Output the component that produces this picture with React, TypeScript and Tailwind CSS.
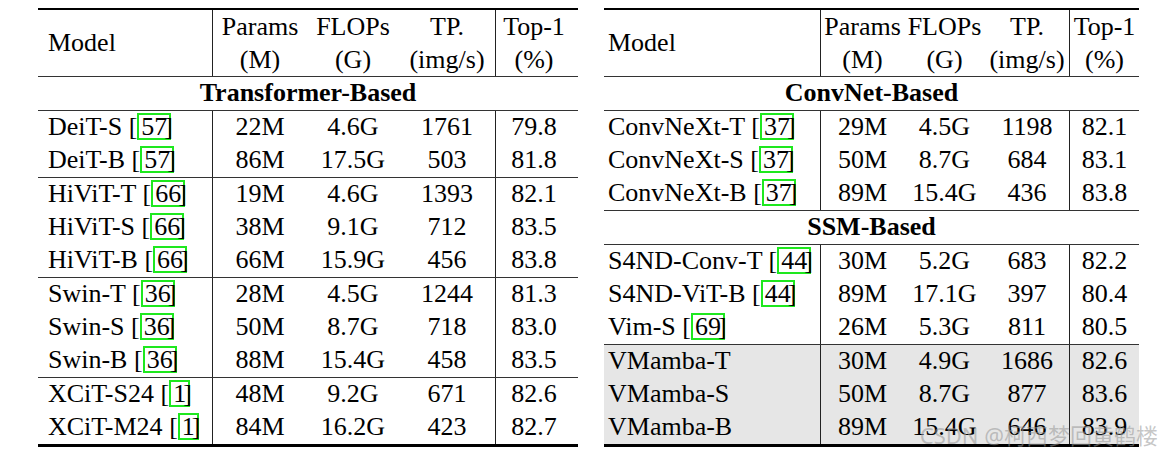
import React from 'react';

type Row = { name: string; cite?: string; params: string; flops: string; tp: string; top1: string };
type Group = { rows: Row[]; shaded?: boolean };
type Section = { title: string; groups: Group[] };

const r = (name: string, cite: string | undefined, params: string, flops: string, tp: string, top1: string): Row => ({
  name,
  cite,
  params,
  flops,
  tp,
  top1,
});

const leftSections: Section[] = [
  {
    title: 'Transformer-Based',
    groups: [
      { rows: [r('DeiT-S', '57', '22M', '4.6G', '1761', '79.8'), r('DeiT-B', '57', '86M', '17.5G', '503', '81.8')] },
      {
        rows: [
          r('HiViT-T', '66', '19M', '4.6G', '1393', '82.1'),
          r('HiViT-S', '66', '38M', '9.1G', '712', '83.5'),
          r('HiViT-B', '66', '66M', '15.9G', '456', '83.8'),
        ],
      },
      {
        rows: [
          r('Swin-T', '36', '28M', '4.5G', '1244', '81.3'),
          r('Swin-S', '36', '50M', '8.7G', '718', '83.0'),
          r('Swin-B', '36', '88M', '15.4G', '458', '83.5'),
        ],
      },
      { rows: [r('XCiT-S24', '1', '48M', '9.2G', '671', '82.6'), r('XCiT-M24', '1', '84M', '16.2G', '423', '82.7')] },
    ],
  },
];

const rightSections: Section[] = [
  {
    title: 'ConvNet-Based',
    groups: [
      {
        rows: [
          r('ConvNeXt-T', '37', '29M', '4.5G', '1198', '82.1'),
          r('ConvNeXt-S', '37', '50M', '8.7G', '684', '83.1'),
          r('ConvNeXt-B', '37', '89M', '15.4G', '436', '83.8'),
        ],
      },
    ],
  },
  {
    title: 'SSM-Based',
    groups: [
      {
        rows: [
          r('S4ND-Conv-T', '44', '30M', '5.2G', '683', '82.2'),
          r('S4ND-ViT-B', '44', '89M', '17.1G', '397', '80.4'),
          r('Vim-S', '69', '26M', '5.3G', '811', '80.5'),
        ],
      },
      {
        shaded: true,
        rows: [
          r('VMamba-T', undefined, '30M', '4.9G', '1686', '82.6'),
          r('VMamba-S', undefined, '50M', '8.7G', '877', '83.6'),
          r('VMamba-B', undefined, '89M', '15.4G', '646', '83.9'),
        ],
      },
    ],
  },
];

// hyperref style green link box
function Cite({ n }: { n: string }) {
  return (
    <>
      [
      <span className="inline-block h-[27px] border-2 border-[#1ee81e] px-[2px] leading-[23px]">{n}</span>
      <span className="-ml-[7px]">]</span>
    </>
  );
}

function Table({ cols, sections, size }: { cols: string[]; sections: Section[]; size: string }) {
  return (
    <div className={`border-t-2 border-b-[3px] border-black ${size}`}>
      <div className="flex leading-[33px]">
        <div className={`${cols[0]} h-[66px] leading-[65px]`}>Model</div>
        <div className={`${cols[1]} border-l border-[#222] text-center`}>
          Params
          <br />
          (M)
        </div>
        <div className={`${cols[2]} text-center`}>
          FLOPs
          <br />
          (G)
        </div>
        <div className={`${cols[3]} text-center`}>
          TP.
          <br />
          (img/s)
        </div>
        <div className={`${cols[4]} border-l border-[#222] text-center`}>
          Top-1
          <br />
          (%)
        </div>
      </div>
      {sections.map((s) => (
        <div key={s.title}>
          <div className="h-[34px] border-t border-[#333] text-center font-bold leading-[32px]">{s.title}</div>
          {s.groups.map((g, gi) => (
            <div key={gi} className={`border-t border-[#333] ${g.shaded ? 'bg-[#e6e6e6]' : ''}`}>
              {g.rows.map((row) => (
                <div key={row.name} className="flex h-[33px] leading-[32px]">
                  <div className={`${cols[0]} whitespace-nowrap`}>
                    {row.name}
                    {row.cite && (
                      <>
                        {' '}
                        <Cite n={row.cite} />
                      </>
                    )}
                  </div>
                  <div className={`${cols[1]} border-l border-[#222] text-center`}>{row.params}</div>
                  <div className={`${cols[2]} text-center`}>{row.flops}</div>
                  <div className={`${cols[3]} text-center`}>{row.tp}</div>
                  <div className={`${cols[4]} border-l border-[#222] text-center`}>{row.top1}</div>
                </div>
              ))}
            </div>
          ))}
        </div>
      ))}
    </div>
  );
}

export default function App() {
  return (
    <div className="relative flex h-[457px] w-[1162px] gap-[26px] overflow-hidden bg-white pl-[38px] pt-[8px] font-['Liberation_Serif',serif] text-black">
      <div className="w-[540px]">
        <Table
          size="text-[26px]"
          sections={leftSections}
          cols={['w-[174px] pl-[10px]', 'w-[95px]', 'w-[92px]', 'w-[96px]', 'w-[83px] pr-[6px]']}
        />
      </div>
      <div className="w-[535px]">
        <Table
          size="text-[26px]"
          sections={rightSections}
          cols={['w-[216px] pl-[4px]', 'w-[84px]', 'w-[81px]', 'w-[84px]', 'w-[70px]']}
        />
      </div>
      <div className="pointer-events-none absolute right-[4px] top-[421px] whitespace-nowrap font-['Noto_Sans','Noto_Sans_CJK_SC',sans-serif] text-[22px] leading-[28px] text-[rgba(150,150,150,0.55)]">
        CSDN @柯西梦回黄鹤楼
      </div>
    </div>
  );
}
